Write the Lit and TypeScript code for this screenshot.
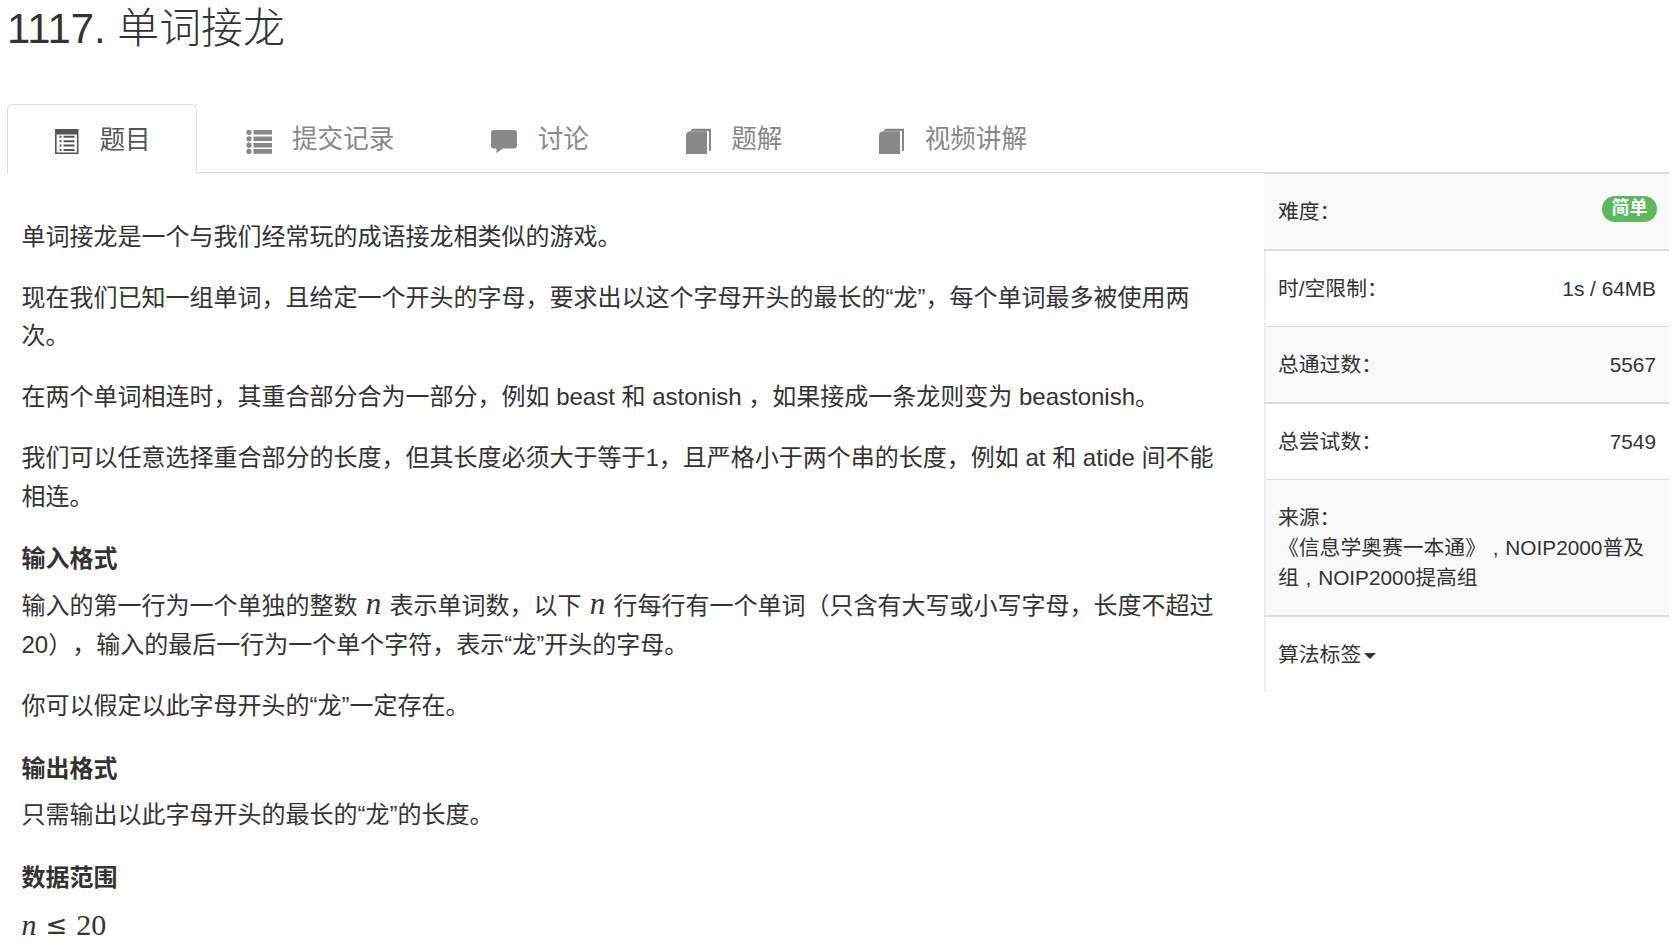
import { LitElement, css, html, svg } from "lit";
import { customElement } from "lit/decorators.js";

const icons = {
  listAlt: svg`<path fill-rule="evenodd" d="M0 1h23.500v25H0zM1.600 6.500v17.900h20.300V6.500zM4.500 7.800h2v2h-2zm4 0h11v2h-11zM4.500 12.200h2v2h-2zm4 0h11v2h-11zM4.500 16.600h2v2h-2zm4 0h11v2h-11zM4.500 21h2v2h-2zm4 0h11v2h-11z"/>`,
  thList: svg`<circle cx="3" cy="4.300" r="2.600"/><circle cx="3" cy="10.800" r="2.600"/><circle cx="3" cy="17.200" r="2.600"/><circle cx="3" cy="23.400" r="2.600"/><path d="M7.500 2H26v4.600H7.500zm0 6.500H26v4.600H7.500zm0 6.400H26v4.600H7.500zm0 6.200H26v4.600H7.500z"/>`,
  comment: svg`<path d="M3 2h20a3 3 0 0 1 3 3v12.500a3 3 0 0 1-3 3H12l-6.500 4.500v-4.500H3a3 3 0 0 1-3-3V5a3 3 0 0 1 3-3z"/>`,
  book: svg`<path d="M0 26V7C0 4.500 2 3.200 5 3.200H21V26z"/><path d="M5 2.400C5.800 1.200 6.800 .8 8 .8H25V23H23V3H5z"/>`,
};

const tabs = [
  { icon: icons.listAlt, label: "题目", vb: "0 0 24 26", w: 24 },
  { icon: icons.thList, label: "提交记录", vb: "0 0 26 26", w: 26 },
  { icon: icons.comment, label: "讨论", vb: "0 0 26 26", w: 26 },
  { icon: icons.book, label: "题解", vb: "0 0 25 26", w: 25 },
  { icon: icons.book, label: "视频讲解", vb: "0 0 25 26", w: 25 },
];

@customElement("app-root")
export class AppRoot extends LitElement {
  static styles = css`
    :host {
      display: block;
      height: 949px;
      overflow: hidden;
      background: #fff;
      color: #333;
      font-family: "Liberation Sans", "Noto Sans CJK SC", sans-serif;
      text-spacing-trim: space-all;
    }

    .page {
      padding: 0 10px 0 7px;
    }

    .title {
      margin: 0 0 46px;
      height: 58px;
      line-height: 58px;
      font-size: 41.9px;
      font-weight: 300;
      white-space: nowrap;
    }

    .tabs {
      display: flex;
      height: 68px;
      border-bottom: 1px solid #ddd;
    }

    .tab {
      display: flex;
      align-items: center;
      gap: 20.300px;
      height: 68px;
      box-sizing: border-box;
      padding: 0 47.500px;
      font-size: 25.6px;
      color: #888;
      border: 1px solid transparent;
      border-bottom: 0;
    }

    .tab svg {
      flex: none;
      margin-top: 4px;
      fill: currentColor;
    }

    .tab span {
      margin-bottom: 4px;
    }

    .tab.active {
      height: 69px;
      padding: 0 45.500px 0 47.200px;
      color: #555;
      background: #fff;
      border-color: #ddd;
      border-radius: 6px 6px 0 0;
    }

    .body {
      display: flex;
      align-items: flex-start;
    }

    .content {
      flex: 1;
      min-width: 0;
      padding: 45px 36px 0 14.500px;
      font-size: 24px;
      line-height: 38.4px;
    }

    .content p {
      margin: 0 0 22.500px;
    }

    .content h4 {
      margin: 0 0 8.500px;
      padding-top: 2px;
      font-size: 24px;
      font-weight: 700;
      line-height: 38.4px;
    }

    .math {
      padding: 0 1.600px;
      font-family: "Liberation Serif", serif;
      font-size: 31px;
      line-height: 0;
    }

    .content p.formula {
      display: flex;
      align-items: center;
      gap: 9px;
      height: 38.4px;
      font-family: "Liberation Serif", serif;
      font-size: 30px;
    }

    .leq {
      font-family: "DejaVu Sans", sans-serif;
      font-size: 26px;
    }

    .side {
      flex: none;
      width: 405px;
      height: 520px;
      margin-top: -1px;
      box-sizing: border-box;
      border-left: 2px solid #eee;
      font-size: 20.8px;
      line-height: 30px;
    }

    .row {
      display: flex;
      justify-content: space-between;
      padding: 22.500px 13px 22.500px 12px;
      border-top: 1px solid #ddd;
    }

    .row.thick {
      margin-left: -2px;
      padding-left: 14px;
      border-top-width: 2px;
    }

    .row.odd {
      background: #f9f9f9;
    }

    .row.source {
      display: block;
      word-spacing: 1px;
    }

    .badge {
      display: block;
      width: 55px;
      height: 26px;
      margin: -1px -1px 0 0;
      border-radius: 13px;
      background: #5cb85c;
      color: #fff;
      font-size: 18px;
      font-weight: 700;
      line-height: 24px;
      text-align: center;
    }

    .caret {
      display: inline-block;
      width: 0;
      height: 0;
      margin-left: 3px;
      vertical-align: middle;
      border-top: 6px solid #333;
      border-left: 6px solid transparent;
      border-right: 6px solid transparent;
    }
  `;

  render() {
    return html`
      <div class="page">
        <h1 class="title">1117. 单词接龙</h1>
        <div class="tabs">
          ${tabs.map(
            (t, i) => html`
              <div class="tab ${i === 0 ? "active" : ""}">
                <svg width=${t.w} height="26" viewBox=${t.vb}>${t.icon}</svg>
                <span>${t.label}</span>
              </div>
            `
          )}
        </div>
        <div class="body">
          <div class="content">
            <p>单词接龙是一个与我们经常玩的成语接龙相类似的游戏。</p>
            <p>现在我们已知一组单词，且给定一个开头的字母，要求出以这个字母开头的最长的“龙”，每个单词最多被使用两次。</p>
            <p>在两个单词相连时，其重合部分合为一部分，例如 beast 和 astonish ，如果接成一条龙则变为 beastonish。</p>
            <p>我们可以任意选择重合部分的长度，但其长度必须大于等于1，且严格小于两个串的长度，例如 at 和 atide 间不能相连。</p>
            <h4>输入格式</h4>
            <p>输入的第一行为一个单独的整数 <span class="math"><i>n</i></span> 表示单词数，以下 <span class="math"><i>n</i></span> 行每行有一个单词（只含有大写或小写字母，长度不超过20），输入的最后一行为一个单个字符，表示“龙”开头的字母。</p>
            <p>你可以假定以此字母开头的“龙”一定存在。</p>
            <h4>输出格式</h4>
            <p>只需输出以此字母开头的最长的“龙”的长度。</p>
            <h4>数据范围</h4>
            <p class="formula"><i>n</i><span class="leq">≤</span><span>20</span></p>
          </div>
          <aside class="side">
            <div class="row odd thick"><span>难度：</span><span class="badge">简单</span></div>
            <div class="row thick"><span>时/空限制：</span><span>1s / 64MB</span></div>
            <div class="row odd"><span>总通过数：</span><span>5567</span></div>
            <div class="row thick"><span>总尝试数：</span><span>7549</span></div>
            <div class="row odd source">来源：<br />《信息学奥赛一本通》 , NOIP2000普及组 , NOIP2000提高组</div>
            <div class="row thick">
              <span>算法标签<span class="caret"></span></span>
            </div>
          </aside>
        </div>
      </div>
    `;
  }
}
